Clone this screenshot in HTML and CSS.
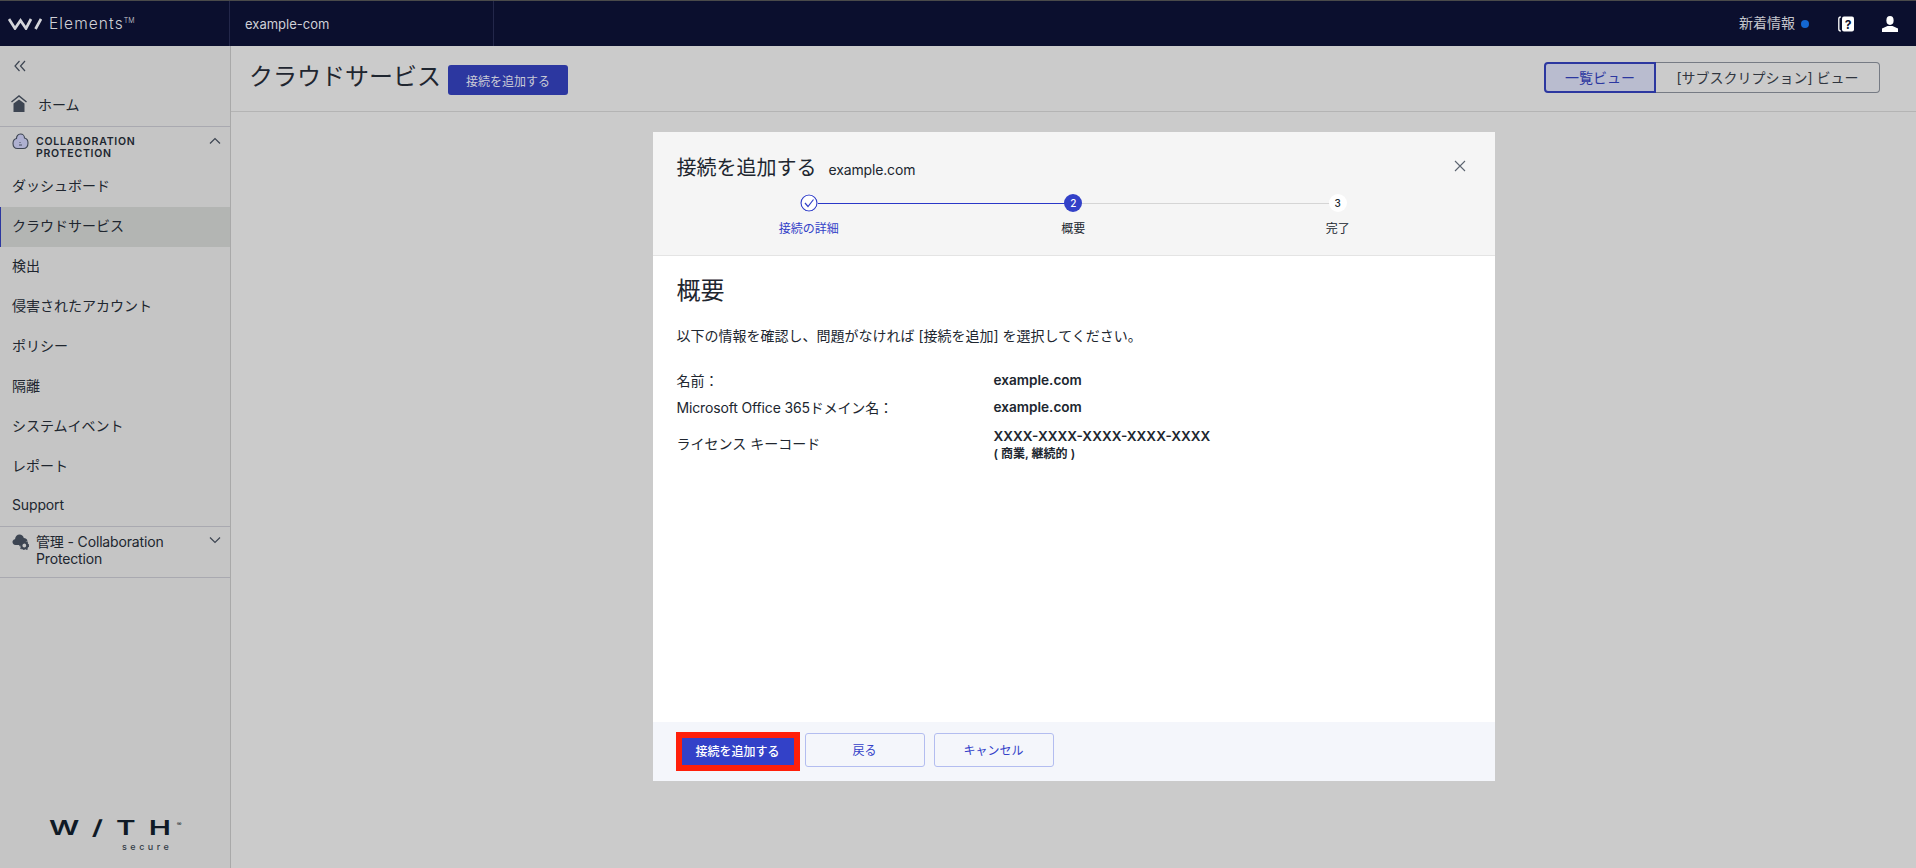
FILE: index.html
```html
<!DOCTYPE html>
<html lang="ja">
<head>
  <title>クラウドサービス</title>
  <link rel="stylesheet" href="styles.css">
</head>
<body>
  <header class="topbar">
    <div class="brand">
      <svg class="brand-mark" viewBox="0 0 34 12" width="34" height="12"><path d="M1 1 L7 10.5 L12.5 2.5 L18 10.5 L23 1 M33 1 L27.5 11" fill="none" stroke="#d4d5da" stroke-width="2.7"/></svg>
      <span class="brand-name">Elements<sup>TM</sup></span>
    </div>
    <div class="org">example-com</div>
    <div class="top-actions">
      <span class="news">新着情報</span>
      <span class="news-dot"></span>
      <svg class="top-icon help" viewBox="0 0 16 16" width="16" height="16">
        <path d="M2.8 1 C1.2 1 0.8 2 0.8 3 V13 C0.8 14 1.2 15 2.8 15" fill="none" stroke="#fff" stroke-width="1.3"/>
        <rect x="4" y="0.5" width="12" height="15" rx="2" fill="#fff"/>
        <text x="10" y="13" text-anchor="middle" class="help-mark">?</text>
      </svg>
      <svg class="top-icon" viewBox="0 0 16 16" width="16" height="16">
        <ellipse cx="8" cy="4.5" rx="3.6" ry="4.4" fill="#fff"/>
        <path d="M0 16 V12.5 L5.5 10 H10.5 L16 12.5 V16 Z" fill="#fff"/>
      </svg>
    </div>
  </header>

  <div class="layout">
    <aside class="sidebar">
      <div class="collapse">
        <svg viewBox="0 0 12 12" width="12" height="12"><path d="M5.5 1 L1 6 L5.5 11 M11 1 L6.5 6 L11 11" fill="none" stroke="#3d4552" stroke-width="1.2"/></svg>
      </div>
      <div class="home">
        <svg viewBox="0 0 16 18" width="16" height="18"><path d="M0.5 7 L8 1 L15.5 7" fill="none" stroke="#3d4552" stroke-width="1.5"/><path d="M2.5 8.5 L8 4.5 L13.5 8.5 V17 H2.5 Z" fill="#3d4552"/></svg>
        <span>ホーム</span>
      </div>
      <div class="section">
        <svg class="section-icon" viewBox="0 0 17 17" width="17" height="17"><path d="M8.5 1 C11 1 12.5 3 12.5 5 C15 5.5 16 7.5 16 10 C16 13.5 14 15.5 11 15.5 H5.5 C2.5 15.5 1 13.5 1 10.5 C1 8 2.5 6 4.5 5.5 C4.5 3 6 1 8.5 1 Z" fill="#aeb0d0" stroke="#3d4552" stroke-width="1.1"/><path d="M8 9 V10 M7 12 H10" stroke="#3d4552" stroke-width="0.9"/></svg>
        <span class="section-title">COLLABORATION PROTECTION</span>
        <svg class="chevron" viewBox="0 0 12 8" width="12" height="8"><path d="M1 6.5 L6 1.5 L11 6.5" fill="none" stroke="#3d4552" stroke-width="1.2"/></svg>
      </div>
      <nav class="nav">
        <a>ダッシュボード</a>
        <a class="active">クラウドサービス</a>
        <a>検出</a>
        <a>侵害されたアカウント</a>
        <a>ポリシー</a>
        <a>隔離</a>
        <a>システムイベント</a>
        <a>レポート</a>
        <a class="latin">Support</a>
      </nav>
      <div class="admin">
        <svg class="admin-icon" viewBox="0 0 17 17" width="17" height="17"><path d="M3.5 12 C1.5 12 0.5 10.5 0.5 9 C0.5 7.5 1.5 6.5 3 6.2 C3.3 3.5 5.2 1.5 7.5 1.5 C9.7 1.5 11.3 3 11.8 5 C13.5 5 15 6 15.5 7.5 L9.5 12 Z" fill="#3d4552"/><circle cx="12.3" cy="12.5" r="3" fill="none" stroke="#3d4552" stroke-width="2.2"/><circle cx="12.3" cy="12.5" r="4.4" fill="none" stroke="#3d4552" stroke-width="1.2" stroke-dasharray="1.6 1.6"/></svg>
        <span class="admin-title latin">管理 - Collaboration Protection</span>
        <svg class="chevron" viewBox="0 0 12 8" width="12" height="8"><path d="M1 1.5 L6 6.5 L11 1.5" fill="none" stroke="#3d4552" stroke-width="1.2"/></svg>
      </div>
      <div class="with-logo">
        <div class="with-word">W/TH<sup>®</sup></div>
        <div class="with-sub">secure</div>
      </div>
    </aside>

    <main class="main">
      <div class="page-head">
        <h1>クラウドサービス</h1>
        <button class="btn-dim">接続を追加する</button>
        <div class="view-toggle">
          <button class="view-on">一覧ビュー</button>
          <button class="view-off">[サブスクリプション] ビュー</button>
        </div>
      </div>

      <div class="modal-wrap">
        <section class="modal">
          <div class="modal-head">
            <div class="modal-title">
              <h2>接続を追加する</h2>
              <span class="latin">example.com</span>
              <svg class="close" viewBox="0 0 12 12" width="12" height="12"><path d="M1 1 L11 11 M11 1 L1 11" stroke="#5c6470" stroke-width="1.1"/></svg>
            </div>
            <ol class="steps">
              <li class="step done">
                <svg class="step-dot" viewBox="0 0 18 18" width="18" height="18"><circle cx="9" cy="9" r="8" fill="#fff" stroke="#3341c8" stroke-width="1.2"/><path d="M5 9 L8 12.5 L13.5 5.5" fill="none" stroke="#3341c8" stroke-width="1.2"/></svg>
                <span>接続の詳細</span>
              </li>
              <li class="step current">
                <b class="step-dot">2</b>
                <span>概要</span>
              </li>
              <li class="step">
                <b class="step-dot">3</b>
                <span>完了</span>
              </li>
            </ol>
          </div>

          <div class="modal-body">
            <h3>概要</h3>
            <p>以下の情報を確認し、問題がなければ [接続を追加] を選択してください。</p>
            <div class="summary">
              <div>名前：</div>
              <div class="value">example.com</div>
              <div class="latin">Microsoft Office 365ドメイン名：</div>
              <div class="value">example.com</div>
              <div>ライセンス キーコード</div>
              <div class="value">XXXX-XXXX-XXXX-XXXX-XXXX<small>( 商業, 継続的 )</small></div>
            </div>
          </div>

          <div class="modal-foot">
            <button class="btn-primary">接続を追加する</button>
            <button class="btn-ghost">戻る</button>
            <button class="btn-ghost">キャンセル</button>
          </div>
        </section>
      </div>
    </main>
  </div>
</body>
</html>
```

FILE: styles.css
```css
* {
  box-sizing: border-box;
}

html, body {
  height: 100%;
}

body {
  margin: 0;
  display: flex;
  flex-direction: column;
  overflow: hidden;
  font-family: Inter, "Noto Sans CJK JP", sans-serif;
  font-size: 14px;
  color: #20262f;
  background: #cbcbcb;
}

button {
  font-family: inherit;
  cursor: pointer;
}

h1, h2, h3, p, ol {
  margin: 0;
  padding: 0;
  font-weight: 400;
}

.latin {
  letter-spacing: -0.15px;
}

/* top bar */
.topbar {
  height: 46px;
  flex: none;
  display: flex;
  align-items: center;
  background: #0b0f2e;
  border-top: 1px solid #4a4a4a;
}

.brand {
  width: 230px;
  height: 100%;
  display: flex;
  align-items: center;
  gap: 7px;
  padding-left: 8px;
  border-right: 1px solid #23274a;
}

.brand-name {
  font-size: 15.5px;
  font-weight: 300;
  letter-spacing: 1.1px;
  color: #cfd0d6;
}

.brand-name sup {
  font-size: 7px;
  letter-spacing: 0;
  vertical-align: 6px;
  line-height: 0;
}

.org {
  width: 264px;
  height: 100%;
  display: flex;
  align-items: center;
  padding-left: 15px;
  font-size: 13px;
  color: #cfd0d6;
  border-right: 1px solid #23274a;
}

.top-actions {
  margin-left: auto;
  display: flex;
  align-items: center;
  padding-right: 18px;
}

.news {
  color: #c4c5cb;
  padding-bottom: 3px;
}

.news-dot {
  width: 8px;
  height: 8px;
  margin-left: 6px;
  border-radius: 50%;
  background: #1467d2;
}

.top-icon {
  margin-left: 28px;
}

.help {
  margin-left: 29px;
}

.help-mark {
  font: 700 12px Inter, sans-serif;
  fill: #0b0f2e;
}

/* sidebar */
.layout {
  flex: 1;
  display: flex;
  min-height: 0;
}

.sidebar {
  width: 231px;
  flex: none;
  display: flex;
  flex-direction: column;
  background: #c5c5c5;
  border-right: 1px solid #a9a9a9;
}

.collapse {
  height: 38px;
  display: flex;
  align-items: center;
  padding: 2px 0 0 14px;
}

.home {
  height: 43px;
  display: flex;
  align-items: center;
  gap: 11px;
  padding: 0 0 2px 11px;
  border-bottom: 1px solid #a9a9b0;
}

.section {
  height: 40px;
  display: flex;
  align-items: flex-start;
  padding: 9px 9px 0 12px;
}

.section-icon {
  flex: none;
  margin: -3px 7px 0 0;
}

.section-title {
  width: 120px;
  font-size: 10.5px;
  font-weight: 600;
  line-height: 12px;
  letter-spacing: 0.75px;
}

.chevron {
  margin-left: auto;
  margin-top: 3px;
}

.section .chevron {
  margin-top: 1px;
}

.nav {
  display: flex;
  flex-direction: column;
}

.nav a {
  height: 40px;
  display: flex;
  align-items: center;
  padding: 0 0 4px 12px;
}

.nav a:last-child {
  height: 39px;
}

.nav a.active {
  padding-left: 11px;
  background: #b3b5b3;
  border-left: 1px solid #2c37a0;
}

.admin {
  height: 52px;
  display: flex;
  align-items: flex-start;
  padding: 6px 9px 0 12px;
  line-height: 17px;
  border-top: 1px solid #a9a9b0;
  border-bottom: 1px solid #a9a9b0;
}

.admin-icon {
  flex: none;
  margin-right: 7px;
}

.admin-title {
  width: 145px;
}

.with-logo {
  margin-top: auto;
  margin-bottom: 17px;
  padding-left: 49px;
  color: #0f1a26;
}

.with-word {
  font-size: 20.5px;
  font-weight: 600;
  line-height: 18px;
  letter-spacing: 9px;
  white-space: nowrap;
  transform: scaleX(1.45);
  transform-origin: left center;
}

.with-word sup {
  font-size: 5px;
  font-weight: 400;
  letter-spacing: 0;
  margin-left: -5px;
  vertical-align: 9px;
  line-height: 0;
}

.with-sub {
  margin-top: 5px;
  padding-left: 73px;
  font-size: 9px;
  font-weight: 500;
  line-height: 9px;
  letter-spacing: 3.5px;
  color: #333c46;
}

/* page head */
.main {
  flex: 1;
  display: flex;
  flex-direction: column;
  min-width: 0;
}

.page-head {
  height: 66px;
  flex: none;
  display: flex;
  align-items: center;
  padding: 0 36px 0 18px;
  border-bottom: 1px solid #b4b4b4;
}

.page-head h1 {
  font-size: 24px;
  line-height: 30px;
  margin-bottom: 3px;
  color: #1f2630;
}

.btn-dim {
  width: 120px;
  height: 30px;
  margin: 3px 0 0 7px;
  font-size: 12px;
  color: #c9cad6;
  background: #2c37a0;
  border: none;
  border-radius: 3px;
}

.view-toggle {
  margin-left: auto;
  display: flex;
  margin-bottom: 3px;
}

.view-toggle button {
  height: 31px;
  font-size: 14px;
}

.view-on {
  width: 112px;
  color: #2c37a0;
  background: #b9bccf;
  border: 2px solid #2c37a0;
  border-radius: 4px 0 0 4px;
}

.view-off {
  width: 224px;
  color: #30363f;
  background: #cbcbcb;
  border: 1px solid #767b84;
  border-left: none;
  border-radius: 0 4px 4px 0;
}

/* modal */
.modal-wrap {
  flex: 1;
  display: flex;
  justify-content: center;
  padding-top: 20px;
}

.modal {
  width: 842px;
  height: 649px;
  display: flex;
  flex-direction: column;
  background: #fff;
}

.modal-head {
  height: 124px;
  flex: none;
  padding: 23px 24px 0;
  background: #f5f5f5;
  border-bottom: 1px solid #e4e4e4;
}

.modal-title {
  display: flex;
  align-items: baseline;
  gap: 12px;
  height: 26px;
}

.modal-title h2 {
  font-size: 20px;
  line-height: 26px;
}

.modal-title span {
  font-size: 14px;
}

.close {
  align-self: center;
  margin: 0 5px 4px auto;
}

.steps {
  display: grid;
  grid-template-columns: repeat(3, 264.5px);
  list-style: none;
  margin-top: 13px;
}

.step {
  position: relative;
  display: flex;
  flex-direction: column;
  align-items: center;
  gap: 9px;
  font-size: 12px;
  line-height: 16px;
}

.step::after {
  content: "";
  position: absolute;
  top: 9px;
  left: 50%;
  width: 100%;
  height: 1px;
  background: #d5d5d5;
}

.step:last-child::after {
  display: none;
}

.step.done::after {
  background: #2a38c8;
}

.step.done span {
  color: #3341c8;
}

.step-dot {
  position: relative;
  z-index: 1;
  width: 18px;
  height: 18px;
  display: flex;
  align-items: center;
  justify-content: center;
  font-size: 10px;
  font-weight: 500;
  border-radius: 50%;
  background: #fff;
}

.current .step-dot {
  color: #fff;
  background: #3341c8;
}

.modal-body {
  flex: 1;
  padding: 20px 24px 0;
}

.modal-body h3 {
  font-size: 24px;
  line-height: 30px;
  color: #1f2630;
}

.modal-body p {
  margin-top: 20px;
  line-height: 20px;
}

.summary {
  display: grid;
  grid-template-columns: 317px 1fr;
  grid-template-rows: 27px 27px 46px;
  align-items: center;
  margin-top: 20px;
}

.value {
  font-size: 13.6px;
  font-weight: 600;
  line-height: 20px;
}

.value small {
  display: block;
  font-size: 12px;
  line-height: 15px;
}

.modal-foot {
  height: 59px;
  flex: none;
  display: flex;
  align-items: flex-start;
  gap: 9px;
  padding: 10px 0 0 23px;
  background: #f4f6fb;
}

.btn-primary {
  width: 124px;
  height: 39px;
  margin-right: -4px;
  padding-bottom: 3px;
  font-size: 12px;
  font-weight: 500;
  color: #fff;
  background: #3341c8;
  border: 6px solid #ff1f0a;
}

.btn-ghost {
  width: 120px;
  height: 34px;
  margin-top: 1px;
  padding-bottom: 3px;
  font-size: 12px;
  color: #3341c8;
  background: #f4f6fb;
  border: 1px solid #b3bdf0;
  border-radius: 3px;
}
```
